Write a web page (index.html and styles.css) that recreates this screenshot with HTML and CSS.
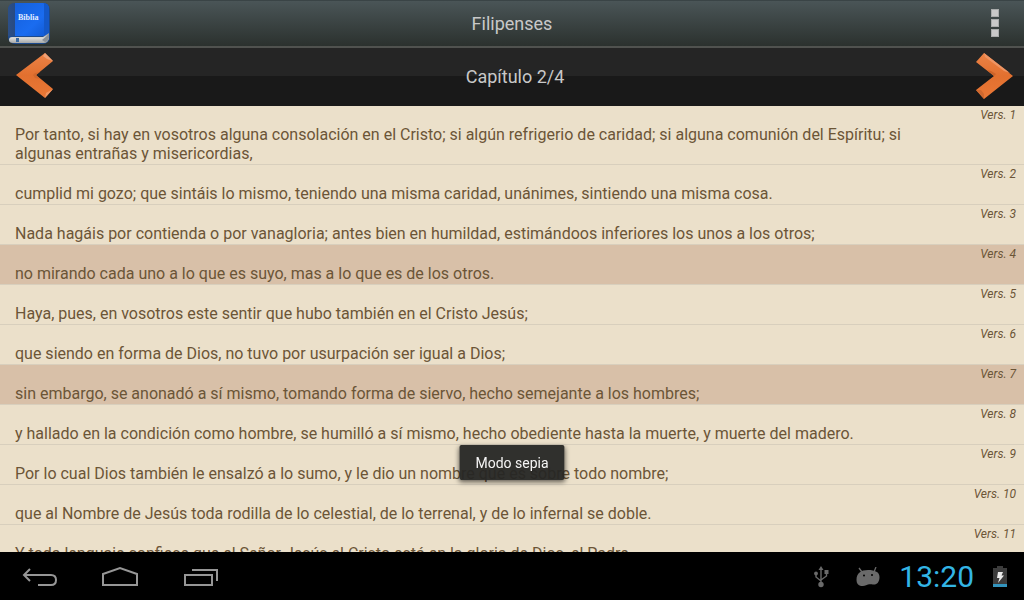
FILE: index.html
```html
<!DOCTYPE html>
<html lang="es">
  <head>
    <meta charset="utf-8">
    <meta name="viewport" content="width=device-width, initial-scale=1">
    <link rel="stylesheet" href="styles.css">
    <title>Filipenses 2</title>
  </head>
  <body>
    <header class="title-bar">
      <svg class="app-icon" viewBox="0 0 42 42" aria-hidden="true">
        <defs>
          <linearGradient id="cover" x1="0" y1="0" x2="1" y2="1">
            <stop offset="0" stop-color="#1560dc"/>
            <stop offset="0.6" stop-color="#1a6cf0"/>
            <stop offset="1" stop-color="#1058d0"/>
          </linearGradient>
          <linearGradient id="spine" x1="0" y1="0" x2="1" y2="0">
            <stop offset="0" stop-color="#2c4f86"/>
            <stop offset="1" stop-color="#143672"/>
          </linearGradient>
          <linearGradient id="pages" x1="0" y1="0" x2="0" y2="1">
            <stop offset="0" stop-color="#8d9196"/>
            <stop offset="0.5" stop-color="#dcdcda"/>
            <stop offset="1" stop-color="#a5a7a8"/>
          </linearGradient>
        </defs>
        <rect x="0" y="0" width="42" height="41" rx="7" fill="#1d4a8c"/>
        <path d="M7 0H35Q41 0 41 6V33H0V7Q0 0 7 0Z" fill="url(#spine)"/>
        <path d="M7 0H35Q41 0 41 6V31L36 33H7Z" fill="url(#cover)"/>
        <path d="M36 0Q41 1 41 6V30L36 33Z" fill="#1458c8"/>
        <path d="M4 34H35L41 30V35Q40 40 36 40H5Q1 40 1 37Q1 34 4 34Z" fill="url(#pages)"/>
        <path d="M34 37L41 31V35Q40 39 37 39Z" fill="#8a9096"/>
        <path d="M8 35h3v4H8z" fill="#3a68a0"/>
        <text x="10" y="17" class="icon-text">Biblia</text>
      </svg>
      <h1 class="title">Filipenses</h1>
      <button class="menu" type="button" aria-label="Más opciones">
        <span></span>
        <span></span>
        <span></span>
      </button>
    </header>

    <nav class="chapter-bar">
      <button class="arrow" type="button" aria-label="Capítulo anterior">
        <svg viewBox="0 0 38 48" width="38" height="48">
          <defs>
            <linearGradient id="orange" x1="0" y1="0" x2="0" y2="1">
              <stop offset="0" stop-color="#ec8347"/>
              <stop offset="0.5" stop-color="#e2702f"/>
              <stop offset="1" stop-color="#ea7836"/>
            </linearGradient>
          </defs>
          <path d="M0 22L29 0L37 8L20 22L37 36L29 45Z" fill="url(#orange)"/>
          <path d="M29 0L37 8L31 6L27 3Z" fill="#f0a074"/>
          <path d="M20 22L24 19L19 20L17 22L19 25L24 26Z" fill="#d2682d"/>
          <path d="M37 36L29 45L30 40Z" fill="#ef9764"/>
        </svg>
      </button>
      <h2 class="title">Capítulo 2/4</h2>
      <button class="arrow" type="button" aria-label="Capítulo siguiente">
        <svg viewBox="0 0 38 48" width="38" height="48">
          <path d="M37 23L8 0L0 9L18 23L0 37L8 46Z" fill="url(#orange)"/>
          <path d="M34 20L8 0L9 4L28 18Z" fill="#ee9463"/>
          <path d="M18 23L11 17L15 18L20 21Z" fill="#cc6329"/>
          <path d="M0 37L8 46L8 41L5 37Z" fill="#cf682f"/>
        </svg>
      </button>
    </nav>

    <main class="chapter">
      <div class="verse">
        <p>Por tanto, si hay en vosotros alguna consolación en el Cristo; si algún refrigerio de caridad; si alguna comunión del Espíritu; si algunas entrañas y misericordias,</p>
        <span class="number">Vers. 1</span>
      </div>
      <div class="verse">
        <p>cumplid mi gozo; que sintáis lo mismo, teniendo una misma caridad, unánimes, sintiendo una misma cosa.</p>
        <span class="number">Vers. 2</span>
      </div>
      <div class="verse">
        <p>Nada hagáis por contienda o por vanagloria; antes bien en humildad, estimándoos inferiores los unos a los otros;</p>
        <span class="number">Vers. 3</span>
      </div>
      <div class="verse marked">
        <p>no mirando cada uno a lo que es suyo, mas a lo que es de los otros.</p>
        <span class="number">Vers. 4</span>
      </div>
      <div class="verse">
        <p>Haya, pues, en vosotros este sentir que hubo también en el Cristo Jesús;</p>
        <span class="number">Vers. 5</span>
      </div>
      <div class="verse">
        <p>que siendo en forma de Dios, no tuvo por usurpación ser igual a Dios;</p>
        <span class="number">Vers. 6</span>
      </div>
      <div class="verse marked">
        <p>sin embargo, se anonadó a sí mismo, tomando forma de siervo, hecho semejante a los hombres;</p>
        <span class="number">Vers. 7</span>
      </div>
      <div class="verse">
        <p>y hallado en la condición como hombre, se humilló a sí mismo, hecho obediente hasta la muerte, y muerte del madero.</p>
        <span class="number">Vers. 8</span>
      </div>
      <div class="verse">
        <p>Por lo cual Dios también le ensalzó a lo sumo, y le dio un nombre que es sobre todo nombre;</p>
        <span class="number">Vers. 9</span>
      </div>
      <div class="verse">
        <p>que al Nombre de Jesús toda rodilla de lo celestial, de lo terrenal, y de lo infernal se doble.</p>
        <span class="number">Vers. 10</span>
      </div>
      <div class="verse">
        <p>Y toda lenguaje confiese que el Señor Jesús el Cristo está en la gloria de Dios, el Padre.</p>
        <span class="number">Vers. 11</span>
      </div>
    </main>

    <div class="toast" role="status">Modo sepia</div>

    <footer class="system-bar">
      <div class="nav-keys">
        <button type="button" aria-label="Atrás">
          <svg viewBox="0 0 38 24" width="38" height="24">
            <path d="M9 4L3 10L9 16M3 10H30Q35 10 35 15Q35 20 30 20H17" />
          </svg>
        </button>
        <button type="button" aria-label="Inicio">
          <svg viewBox="0 0 38 24" width="38" height="24">
            <path d="M2 20V9L19 3L36 9V20Z" />
          </svg>
        </button>
        <button type="button" aria-label="Aplicaciones recientes">
          <svg viewBox="0 0 38 24" width="38" height="24">
            <path d="M4 10H31V20H4ZM11 5H36V16" />
          </svg>
        </button>
      </div>
      <div class="status">
        <svg viewBox="0 0 16 22" width="16" height="22" aria-hidden="true">
          <path d="M8 3V18M3 8V11L8 15M13.5 7V10L8 14" fill="none" stroke="#6a6a6a" stroke-width="1.4"/>
          <path d="M8 0L10.5 4H5.5ZM11.5 4H15.5V8H11.5Z" fill="#6a6a6a"/>
          <circle cx="3" cy="7.5" r="1.9" fill="#6a6a6a"/>
          <circle cx="8" cy="18.5" r="2.7" fill="#6a6a6a"/>
        </svg>
        <svg viewBox="0 0 24 20" width="24" height="20" aria-hidden="true">
          <path d="M3 1L6 5M20 0L18 5" stroke="#6a6a6a" stroke-width="1.3"/>
          <path d="M0.5 13C0.5 6 5 3 12 3C19 3 23.5 5 23.5 10C23.5 15 21 17.5 18 17.500C15 17.5 15 17 12 17.5C9 19 8 19 5 19C2 18.5 0.5 16 0.5 13Z" fill="#6a6a6a"/>
          <circle cx="8" cy="8.5" r="1" fill="#000"/>
          <circle cx="16" cy="8" r="1" fill="#000"/>
        </svg>
        <time class="clock">13:20</time>
        <svg viewBox="0 0 14 22" width="14" height="22" aria-hidden="true">
          <path d="M4 0H10V2H14V21H0V2H4Z" fill="#3c3c3c"/>
          <path d="M0 18H14V21H0Z" fill="#3394bd"/>
          <path d="M5 6H10L8.5 9.5H11L5 17L6.5 12H4Z" fill="#ececec"/>
        </svg>
      </div>
    </footer>
  </body>
</html>
```
FILE: styles.css
```css
* {
  box-sizing: border-box;
}

body {
  display: flex;
  flex-direction: column;
  height: 100vh;
  margin: 0;
  overflow: hidden;
  background-color: #ebe0ca;
  font-family: Roboto, "Liberation Sans", sans-serif;
}

button {
  padding: 0;
  border: none;
  background: none;
  cursor: pointer;
}

svg {
  display: block;
}

.title-bar {
  display: grid;
  grid-template-columns: 42px 1fr 42px;
  align-items: center;
  flex: none;
  height: 48px;
  padding: 0 8px;
  border-top: 1px solid #3a4446;
  border-bottom: 2px solid #50524f;
  background: linear-gradient(#4a5557, #2b312e);
}

.app-icon {
  width: 42px;
  height: 42px;
}

.icon-text {
  fill: #e4eeff;
  font-family: "Liberation Serif", serif;
  font-size: 8px;
  font-weight: bold;
}

.title {
  margin: 0;
  color: #c8c8c8;
  font-size: 18px;
  font-weight: normal;
  line-height: 24px;
  text-align: center;
}

.menu {
  display: flex;
  flex-direction: column;
  align-items: center;
  gap: 2px;
  padding-bottom: 1px;
}

.menu span {
  width: 8px;
  height: 8px;
  border: 1px solid #a9abab;
  background-color: #c9c9c9;
}

.chapter-bar {
  display: flex;
  align-items: center;
  justify-content: space-between;
  flex: none;
  height: 58px;
  padding: 0 10px 0 16px;
  background: linear-gradient(#252525 28px, #191919 28px);
}

.chapter {
  flex: 1;
  min-height: 0;
  overflow: hidden;
}

.verse {
  display: flex;
  justify-content: space-between;
  gap: 24px;
  padding: 0 8px 0 15px;
  border-bottom: 1px solid #d8cfbd;
  color: #6b5537;
}

.verse p {
  margin: 0;
  padding: 19px 0 1px;
  font-size: 16px;
  line-height: 19px;
}

.verse .number {
  flex: none;
  padding-top: 1px;
  font-size: 12px;
  font-style: italic;
  line-height: 16px;
}

.marked {
  background-color: #d8c0a8;
}

.toast {
  position: fixed;
  bottom: 120px;
  left: 50%;
  padding: 9px 16px 7px;
  border-radius: 2px;
  transform: translateX(-50%);
  background-color: rgba(38, 38, 36, 0.95);
  box-shadow: 0 2px 5px rgba(0, 0, 0, 0.6);
  color: #f5f5f5;
  font-size: 14px;
  line-height: 19px;
}

.system-bar {
  display: flex;
  align-items: center;
  justify-content: space-between;
  flex: none;
  height: 48px;
  padding: 2px 17px 0 21px;
  background-color: #000;
}

.nav-keys {
  display: flex;
  gap: 42px;
}

.nav-keys path {
  fill: none;
  stroke: #969696;
  stroke-width: 2;
}

.status {
  display: flex;
  align-items: center;
}

.status svg + svg {
  margin-left: 27px;
}

.clock {
  margin: 0 19px;
  color: #33b5e5;
  font-size: 30px;
  line-height: 46px;
}
```
